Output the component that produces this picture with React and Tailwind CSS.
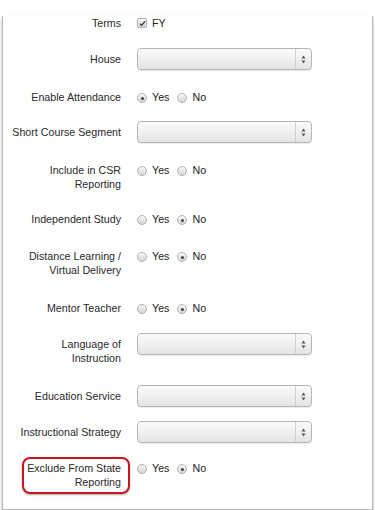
import React from 'react'

const ROWS = [
  { label: ['Terms'], type: 'check', mt: 'mt-[16px]' },
  { label: ['House'], type: 'select', mt: 'mt-[18px]' },
  { label: ['Enable Attendance'], type: 'radio', value: 'yes', mt: 'mt-[20px]' },
  { label: ['Short Course Segment'], type: 'select', mt: 'mt-[17px]' },
  { label: ['Include in CSR', 'Reporting'], type: 'radio', value: null, mt: 'mt-[20px]' },
  { label: ['Independent Study'], type: 'radio', value: 'no', mt: 'mt-[21px]' },
  { label: ['Distance Learning /', 'Virtual Delivery'], type: 'radio', value: 'no', mt: 'mt-[23px]' },
  { label: ['Mentor Teacher'], type: 'radio', value: 'no', mt: 'mt-[24px]' },
  { label: ['Language of', 'Instruction'], type: 'select', mt: 'mt-[18px]' },
  { label: ['Education Service'], type: 'select', mt: 'mt-[20px]' },
  { label: ['Instructional Strategy'], type: 'select', mt: 'mt-[14px]' },
  { label: ['Exclude From State', 'Reporting'], type: 'radio', value: 'no', mt: 'mt-[18px]', highlight: true },
]

function Radio({ checked }) {
  return (
    <span className="mt-[3px] flex h-[10px] w-[10px] shrink-0 items-center justify-center rounded-full border border-[#b0b0b0] bg-gradient-to-b from-[#f4f4f4] to-[#d6d6d6] shadow-[inset_0_1px_1px_rgba(255,255,255,0.8)]">
      {checked && <span className="h-[3px] w-[3px] rounded-full bg-[#444]" />}
    </span>
  )
}

function RadioGroup({ value }) {
  return (
    <div className="flex items-start text-[#222]">
      <Radio checked={value === 'yes'} />
      <span className="ml-[5px]">Yes</span>
      <span className="ml-[8px]">
        <Radio checked={value === 'no'} />
      </span>
      <span className="ml-[5px]">No</span>
    </div>
  )
}

function Select() {
  return (
    <div className="flex h-[22px] w-[175px] items-stretch rounded-[4px] border border-[#b5b5b5] bg-gradient-to-b from-[#fbfbfb] to-[#e4e4e4] shadow-[0_1px_1px_rgba(0,0,0,0.08)]">
      <div className="flex-1" />
      <div className="flex w-[16px] items-center justify-center border-l border-[#cfcfcf]">
        <svg width="5" height="9" viewBox="0 0 5 9">
          <path d="M2.5 0.5 L4.5 3.5 L0.5 3.5 Z" fill="#555" />
          <path d="M2.5 8.5 L4.5 5.5 L0.5 5.5 Z" fill="#555" />
        </svg>
      </div>
    </div>
  )
}

function Check() {
  return (
    <div className="flex items-start text-[#222]">
      <span className="mt-[2px] flex h-[10px] w-[10px] items-center justify-center rounded-[2px] border border-[#b0b0b0] bg-gradient-to-b from-[#f4f4f4] to-[#d6d6d6]">
        <svg width="7" height="7" viewBox="0 0 7 7">
          <path d="M1 3.8 L2.7 5.4 L6 1.4" fill="none" stroke="#333" strokeWidth="1.3" />
        </svg>
      </span>
      <span className="ml-[5px]">FY</span>
    </div>
  )
}

function Row({ row }) {
  const isSelect = row.type === 'select'
  return (
    <div className={`flex items-start ${row.mt}`}>
      <div className={`relative w-[116px] shrink-0 text-right ${isSelect ? 'pt-[4px]' : ''}`}>
        {row.label.map((l) => (
          <div key={l}>{l}</div>
        ))}
        {row.highlight && (
          <div className="absolute left-[17px] right-[-9px] top-[-4px] bottom-[-5px] rounded-[8px] border-[2.5px] border-[#c4161c] shadow-[0_1px_2px_rgba(0,0,0,0.35)]" />
        )}
      </div>
      <div className="ml-[16px]">
        {row.type === 'check' && <Check />}
        {row.type === 'radio' && <RadioGroup value={row.value} />}
        {isSelect && <Select />}
      </div>
    </div>
  )
}

export default function App() {
  return (
    <div className="h-[510px] w-[375px] bg-white font-['Liberation_Sans',Arial,sans-serif] text-[10.7px] leading-[14px] text-[#2a2a2a]">
      <div className="ml-[2px] h-[494px] w-[371px] border-x border-b border-[#b8b8b8] bg-white pl-[2px] shadow-[0_2px_3px_rgba(0,0,0,0.3)]">
        {ROWS.map((row) => (
          <Row key={row.label.join(' ')} row={row} />
        ))}
      </div>
    </div>
  )
}
